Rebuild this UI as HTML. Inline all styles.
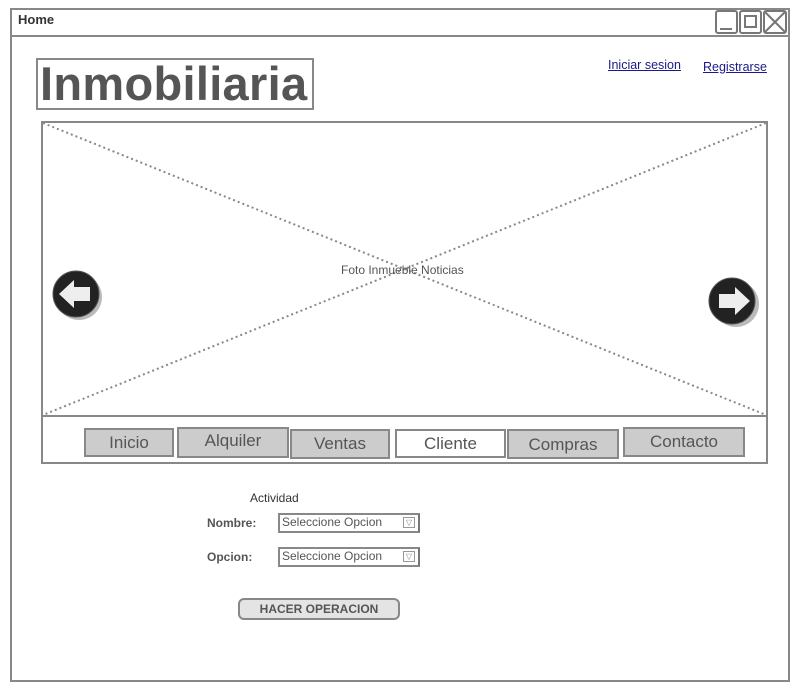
<!DOCTYPE html>
<html><head><style>
body{margin:0;width:797px;height:691px;background:#fff;position:relative;font-family:"Liberation Sans",Arial,sans-serif;overflow:hidden}
.a{position:absolute;box-sizing:border-box}
.tab{position:absolute;box-sizing:border-box;background:#ccc;border:2px solid #888;color:#555;font-size:17px;text-align:center}
.sel{position:absolute;box-sizing:border-box;border:2px solid #888;border-right-color:#777;font-size:12px;color:#555;padding:1px 2px;line-height:13px;width:142px;height:20px}
.sel span{position:absolute;right:3px;top:2px;width:12px;height:11px;border:1px solid #999;box-sizing:border-box;font-size:8px;line-height:9px;text-align:center;color:#888}
</style></head><body>
<div class="a" style="left:10px;top:8px;width:780px;height:674px;border:2px solid #888"></div>
<div class="a" style="left:10px;top:35px;width:780px;height:2px;background:#888"></div>
<div class="a" style="left:18px;top:12px;font-size:13px;font-weight:bold;color:#333">Home</div>
<svg class="a" style="left:714px;top:9px" width="74" height="26" viewBox="0 0 74 26">
<g fill="none" stroke="#777" stroke-width="2">
<rect x="2" y="2" width="21" height="22" rx="2"/><line x1="6" y1="20" x2="18" y2="20"/>
<rect x="26" y="2" width="21" height="22" rx="2"/><rect x="31" y="7" width="11" height="11"/>
<rect x="50" y="2" width="22" height="22" rx="2"/><line x1="51" y1="3" x2="71" y2="23"/><line x1="71" y1="3" x2="51" y2="23"/>
</g></svg>
<div class="a" style="left:36px;top:58px;width:278px;height:52px;border:2px solid #888;font-size:47px;font-weight:bold;color:#555;line-height:48px;padding-left:2px;letter-spacing:0.3px">Inmobiliaria</div>
<a class="a" style="left:608px;top:58px;font-size:12.5px;color:#1a1a8a;text-decoration:underline">Iniciar sesion</a>
<a class="a" style="left:703px;top:60px;font-size:12.5px;color:#1a1a8a;text-decoration:underline">Registrarse</a>
<div class="a" style="left:41px;top:121px;width:727px;height:343px;border:2px solid #888"></div>
<div class="a" style="left:41px;top:415px;width:727px;height:2px;background:#888"></div>
<svg class="a" style="left:43px;top:123px" width="723" height="292"><g stroke="#888" stroke-width="2" stroke-dasharray="2,3"><line x1="0" y1="0" x2="723" y2="292"/><line x1="723" y1="0" x2="0" y2="292"/></g></svg>
<div class="a" style="left:341px;top:263px;font-size:12px;color:#555">Foto Inmueble Noticias</div>
<svg class="a" style="left:52px;top:270px" width="56" height="52"><circle cx="27" cy="27" r="23" fill="#bbb"/><circle cx="24" cy="24" r="23" fill="#222" stroke="#555" stroke-width="1"/><path d="M7 24 L22 10 L22 17 L38 17 L38 31 L22 31 L22 38 Z" fill="#eee"/></svg>
<svg class="a" style="left:706px;top:277px" width="56" height="52"><circle cx="30" cy="27" r="23" fill="#bbb"/><circle cx="26" cy="24" r="23" fill="#222" stroke="#555" stroke-width="1"/><path d="M44 24 L29 10 L29 17 L13 17 L13 31 L29 31 L29 38 Z" fill="#eee"/></svg>
<div class="tab" style="left:84px;top:428px;width:90px;height:29px;line-height:25px">Inicio</div>
<div class="tab" style="left:177px;top:427px;width:112px;height:31px;line-height:24px">Alquiler</div>
<div class="tab" style="left:290px;top:429px;width:100px;height:30px;line-height:26px">Ventas</div>
<div class="tab" style="left:395px;top:429px;width:111px;height:29px;line-height:25px;background:#fff">Cliente</div>
<div class="tab" style="left:507px;top:429px;width:112px;height:30px;line-height:27px">Compras</div>
<div class="tab" style="left:623px;top:427px;width:122px;height:30px;line-height:25px">Contacto</div>
<div class="a" style="left:250px;top:491px;font-size:12px;color:#333">Actividad</div>
<div class="a" style="left:207px;top:516px;font-size:12px;font-weight:bold;color:#555">Nombre:</div>
<div class="sel" style="left:278px;top:513px">Seleccione Opcion<span>▽</span></div>
<div class="a" style="left:207px;top:550px;font-size:12px;font-weight:bold;color:#555">Opcion:</div>
<div class="sel" style="left:278px;top:547px">Seleccione Opcion<span>▽</span></div>
<div class="a" style="left:238px;top:598px;width:162px;height:22px;border:2px solid #888;border-radius:6px;background:#e4e4e4;font-size:12px;font-weight:bold;color:#555;text-align:center;line-height:18px">HACER OPERACION</div>
</body></html>
